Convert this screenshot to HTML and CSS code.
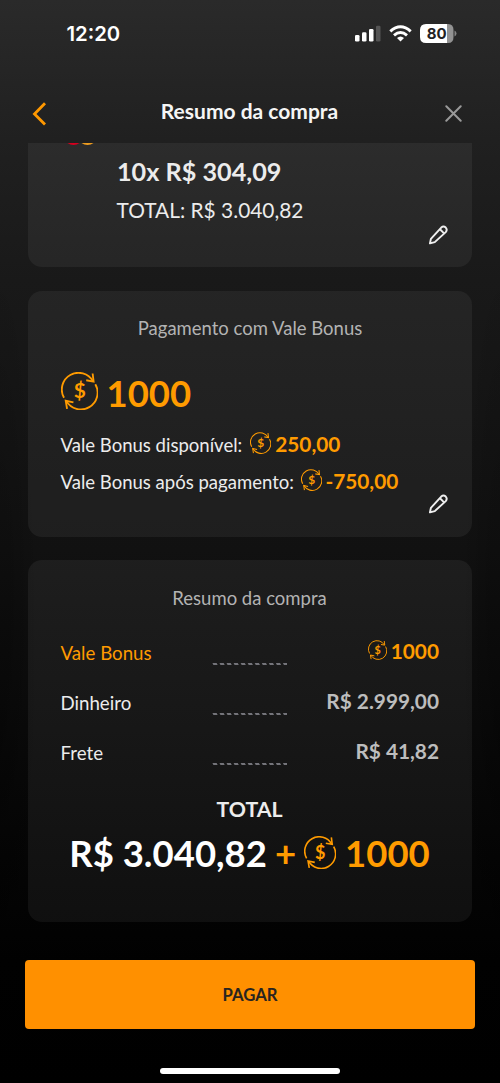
FILE: index.html
```
<!DOCTYPE html>
<html lang="pt-BR">
<head>
<meta charset="utf-8">
<title>Resumo da compra</title>
<link rel="stylesheet" href="styles.css">
</head>
<body>
<svg class="defs" aria-hidden="true">
  <symbol id="coin" viewBox="0 0 110 112">
    <g fill="none" stroke="currentColor" stroke-width="5.500">
      <path d="M9 76A49 49 0 0 1 95 27"/>
      <path d="M102 36A49 49 0 0 1 16 86"/>
      <path d="M75 24L97 28L94 4"/>
      <path d="M37 90L14 85L18 109"/>
    </g>
    <text class="coin-sign" x="56" y="78" text-anchor="middle">$</text>
  </symbol>
  <symbol id="pencil" viewBox="0 0 60 62">
    <g fill="none" stroke="currentColor" stroke-width="6" stroke-linejoin="round">
      <path d="M5 57L8 43L40 8Q47 2 54 8Q60 15 54 22L20 53Z"/>
      <path d="M36 13L49 26"/>
    </g>
  </symbol>
  <symbol id="dashes" viewBox="0 0 75 4">
    <path d="M0 2H75" stroke="#74747a" stroke-width="2.200" stroke-dasharray="4.200 2.850" fill="none" transform="skewX(25)"/>
  </symbol>
</svg>
<div class="screen">
  <div class="status">
    <span class="time">12:20</span>
    <div class="status-icons">
      <svg width="26" height="17" viewBox="0 0 26 17" fill="#fff"><rect y="10" width="4.500" height="6.500" rx="1.300"/><rect x="7" y="7.300" width="4.500" height="9.200" rx="1.300"/><rect x="14" y="4" width="4.500" height="12.500" rx="1.300"/><rect x="21" y=".7" width="4.500" height="15.800" rx="1.300" fill="#555"/></svg>
      <svg width="23" height="17" viewBox="0 0 23 17" fill="none" stroke="#fff" stroke-width="3"><path d="M1.300 6.300Q11.500-2.800 21.700 6.300"/><path d="M5 10.300Q11.500 4.700 18 10.300"/><path d="M8 13Q11.500 9.800 15 13L11.500 16.600Z" fill="#fff" stroke="none"/></svg>
      <svg class="battery" width="37" height="19" viewBox="0 0 37 19"><path d="M6 0H27V19H6Q0 19 0 13V6Q0 0 6 0Z" fill="#fff"/><path d="M27 0H28Q33.500 0 33.500 6V13Q33.500 19 28 19H27Z" fill="#929292"/><path d="M34.500 6.500Q36.500 7.500 36.500 9.500T34.500 12.500Z" fill="#858585"/><text x="16.700" y="15" text-anchor="middle">80</text></svg>
    </div>
  </div>
  <header class="header">
    <svg width="14" height="24" viewBox="0 0 14 24" fill="none" stroke="#ff9800" stroke-width="2.800"><path d="M13 1.300L2.500 12L13 22.500"/></svg>
    <h1>Resumo da compra</h1>
    <svg width="17" height="17" viewBox="0 0 17 17" fill="none" stroke="#999" stroke-width="2" stroke-linecap="round"><path d="M1.300 1.300L15.700 15.700M15.700 1.300L1.300 15.700"/></svg>
  </header>
  <main>
    <section class="card card-installments">
      <svg class="brand" width="28" height="2" viewBox="0 0 28 2"><circle cx="6.500" cy="-8" r="10" fill="#d5001f"/><circle cx="20.500" cy="-8" r="10" fill="#ee9d20"/></svg>
      <p class="installments">10x R$ 304,09</p>
      <p class="installments-total">TOTAL: R$ 3.040,82</p>
      <svg class="edit"><use href="#pencil"/></svg>
    </section>
    <section class="card card-bonus">
      <h2>Pagamento com Vale Bonus</h2>
      <div class="amount accent"><svg class="coin-lg"><use href="#coin"/></svg><span>1000</span></div>
      <p class="line"><span>Vale Bonus disponível:</span><svg class="coin-sm"><use href="#coin"/></svg><b class="accent">250,00</b></p>
      <p class="line"><span>Vale Bonus após pagamento:</span><svg class="coin-sm"><use href="#coin"/></svg><b class="accent">-750,00</b></p>
      <svg class="edit"><use href="#pencil"/></svg>
    </section>
    <section class="card card-summary">
      <h2>Resumo da compra</h2>
      <div class="row"><span class="label accent">Vale Bonus</span><svg class="dash"><use href="#dashes"/></svg><span class="value accent"><svg class="coin-xs"><use href="#coin"/></svg>1000</span></div>
      <div class="row"><span class="label">Dinheiro</span><svg class="dash"><use href="#dashes"/></svg><span class="value">R$ 2.999,00</span></div>
      <div class="row"><span class="label">Frete</span><svg class="dash"><use href="#dashes"/></svg><span class="value">R$ 41,82</span></div>
      <p class="total-label">TOTAL</p>
      <div class="total"><span>R$ 3.040,82</span><span class="accent plus">+</span><svg class="coin-md"><use href="#coin"/></svg><span class="accent">1000</span></div>
    </section>
  </main>
  <button class="pay">PAGAR</button>
  <div class="home"></div>
</div>
</body>
</html>
```

FILE: styles.css
```
* { box-sizing: border-box; }
body { margin: 0; background: #000; }
h1, h2, p { margin: 0; }
svg { display: block; flex: none; }
svg.defs { display: none; }

.screen {
  width: 500px;
  height: 1083px;
  overflow: hidden;
  display: flex;
  flex-direction: column;
  font-family: Lato, "Open Sans", sans-serif;
  color: #ececec;
  background:
    radial-gradient(ellipse 40px 460px at 0 720px, rgba(0,0,0,.3), transparent),
    radial-gradient(ellipse 40px 460px at 500px 720px, rgba(0,0,0,.3), transparent),
    linear-gradient(#2a2a2a 0, #202020 140px, #191919 280px, #111 550px, #080808 780px, #010101 960px, #000 100%);
}

.status {
  height: 67px;
  padding: 0 43px 0 66.500px;
  display: flex;
  align-items: center;
  justify-content: space-between;
}
.time { font: 600 20.300px/24px Inter, sans-serif; color: #fff; }
.status-icons { display: flex; align-items: center; gap: 8px; }
.battery text { font: 700 15px Inter, sans-serif; fill: #222; }

.header {
  height: 76px;
  padding: 17px 38px 0 32px;
  display: grid;
  grid-template-columns: 14px 1fr 17px;
  align-items: start;
}
.header > svg { margin-top: 18px; }
.header > svg:last-child { margin-top: 21px; }
h1 { margin: 13.500px 0 0 8px; text-align: center; font-size: 21px; line-height: 26px; font-weight: 700; color: #f5f5f5; }

main { padding: 0 28px; display: flex; flex-direction: column; gap: 24px; }
.card {
  display: flex;
  flex-direction: column;
  border-radius: 14px;
  background: rgba(255,255,255,.055);
}
.card h2 {
  text-align: center;
  font-size: 18.500px;
  line-height: 24px;
  font-weight: 400;
  color: #b3b3b3;
}
.card .accent { color: #ff9b00; }
.edit { width: 20px; height: 20px; align-self: flex-end; margin-right: 24px; color: #eee; }

.card-installments { height: 124px; border-radius: 0 0 14px 14px; padding-left: 89px; }
.brand { margin-left: -50px; }
.installments { margin-top: 9px; font-size: 25.200px; line-height: 34px; font-weight: 700; }
.installments-total { margin: 9px 0 0 -.5px; font-size: 20.900px; line-height: 26px; }
.card-installments .edit { margin-top: 2px; }

.card-bonus { height: 246px; padding: 25px 0 0 32px; }
.card-bonus h2 { margin-left: -32px; }
.amount { margin-top: 31px; height: 44px; display: flex; align-items: center; font-size: 36.500px; font-weight: 700; }
.coin-lg { width: 37px; height: 38px; margin: -4px 9px 0 .5px; }
.line { height: 37px; padding-left: .5px; display: flex; align-items: center; font-size: 18.550px; }
.amount + .line { margin-top: 11px; }
.line b { margin-top: -1px; font-size: 20.800px; font-weight: 700; line-height: 26px; }
.coin-sm { width: 21px; height: 22px; margin: -4px 4px 0 8px; color: #ff9b00; }
.line + .line .coin-sm { margin-left: 7px; margin-right: 3.500px; }
.card-bonus .edit { margin-top: -6px; }

.card-summary { height: 362px; padding: 26px 33px 0 32px; margin-top: -1px; }
.card-summary h2 { margin-bottom: 17px; }
.row { height: 50px; display: grid; grid-template-columns: 152px 75px 1fr; align-items: center; }
.label { padding: 1px 0 0 .5px; font-size: 18.700px; line-height: 24px; }
.dash { width: 75px; height: 4px; margin-top: 24px; }
.value { display: flex; justify-content: flex-end; align-items: center; font-size: 20.800px; line-height: 26px; font-weight: 700; margin-top: -3px; }
.value:not(.accent) { color: #bdbdbd; }
.coin-xs { width: 19px; height: 20px; margin: -2px 4px 0 0; }
.total-label { margin-top: 19px; text-align: center; font-size: 21.300px; line-height: 26px; font-weight: 700; }
.total { margin-top: 9px; height: 44px; display: flex; justify-content: center; align-items: center; font-size: 36.500px; font-weight: 700; color: #fff; }
.plus { margin: 0 8px; }
.coin-md { width: 32px; height: 33px; margin: -2px 9px 0 0; color: #ff9b00; }
.coin-sign { font: 700 62px Lato, sans-serif; fill: currentColor; }

.pay {
  margin: 38px 25px 0;
  height: 69px;
  flex: none;
  border: 0;
  border-radius: 4px;
  background: #ff9000;
  color: #282420;
  font: 700 16.700px/20px Lato, sans-serif;
}
.home { width: 180px; height: 6px; flex: none; margin: 39px auto 0; border-radius: 3px; background: #fff; }
```
